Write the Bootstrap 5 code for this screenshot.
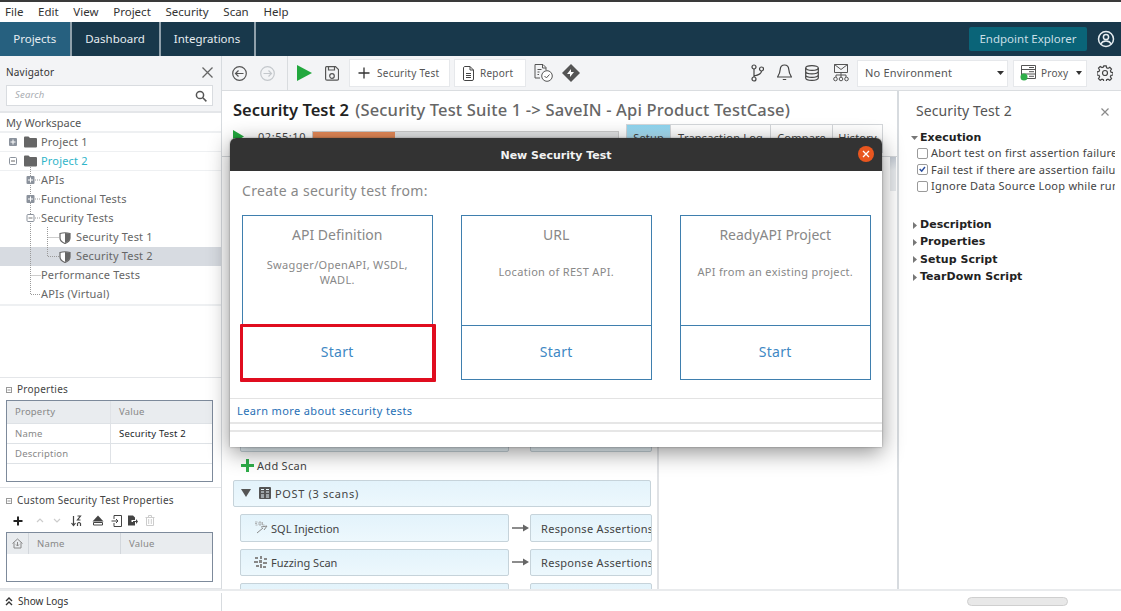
<!DOCTYPE html>
<html lang="en">
<head>
<meta charset="utf-8">
<title>New Security Test</title>
<link href="https://cdn.jsdelivr.net/npm/bootstrap@5.3.0/dist/css/bootstrap.min.css" rel="stylesheet">
<style>
html,body{height:611px;overflow:hidden}
body{font-family:"Noto Sans","Open Sans",sans-serif;font-size:11px;color:#444;background:#fff;position:relative;width:1121px;line-height:1.3}
svg{display:block;flex:none}
.rm-menu{height:22px;border-top:2px solid #3a3a3a;background:#fff;padding-left:5px;gap:14.7px;font-size:11.5px;color:#333}
.rm-top{height:34px;background:#18384b;color:#e6edf1;font-size:11.5px;flex:none}
.rm-tab{width:71.5px;border-right:2px solid #8fa0ab}
.rm-tab.rm-on{background:#26607f}
.rm-ep{width:118px;height:24px;background:#0a6478;color:#c9dfe6;border-radius:2px;font-size:11.5px}
.rm-work{height:533px}
.rm-side{width:222px;border-right:1px solid #d7dbdf;background:#fff;flex:none}
.rm-navhead{background:#f3f4f6;height:57px;padding:10px 6px 0;border-bottom:2px solid #e4e6e9;position:relative;font-size:10px;color:#333;letter-spacing:.2px}
.rm-search{height:21px;background:#fff;border:1px solid #d9dce0;margin:6px 2px 0 0;padding:0 5px 0 8px;font-style:italic;color:#a9adb2;font-size:9.5px}
.rm-ws{height:20px;padding:3px 0 0 6px;border-bottom:2px solid #eef0f2;font-size:11px;color:#555}
.rm-tree{border-bottom:2px solid #eef0f2;height:173px;position:relative}
.rm-node{height:19px;padding-left:41px;gap:5px;color:#666;white-space:nowrap;font-size:11px;letter-spacing:.18px}
.rm-node.rm-l1{padding-left:9px;border-bottom:1px solid #eef0f2;gap:4px}
.rm-node.rm-l3{padding-left:59px}
.rm-node.rm-sel{background:#d7dbe1}
.rm-teal{color:#2fb5c9}
.rm-propbox{border-top:1px solid #e4e6e9;border-bottom:1px solid #e4e6e9;height:110px;padding:5px 8px 0 6px;flex:none}
.rm-ptitle{color:#444;font-size:10px;gap:5px;height:13px;letter-spacing:.25px}
.rm-pgrid{border:1px solid #7d8a9b;margin-top:4px;color:#888;font-size:9.5px;letter-spacing:.2px}
.rm-ghead{background:#e9ecef}
.rm-c1{width:104px;padding:1px 0 0 8px;border-right:1px solid #dfe2e6;display:flex;align-items:center}
.rm-c2{flex:1;padding:1px 0 0 8px;display:flex;align-items:center}
.rm-c3{padding-top:2px}
.rm-main{width:899px;flex:none}
.rm-tool{height:35px;background:#f3f4f6;border-bottom:1px solid #dadde0;padding-left:10px;flex:none}
.rm-tbtn{height:28px;background:#fff;border:1px solid #e6e8eb;font-size:10px;color:#555;letter-spacing:.25px;gap:6px;padding:0 8px}
.rm-center{width:675px;flex:none}
.rm-title{font-size:16.5px;font-weight:600;color:#222;padding:8px 0 0 11px;height:33px;white-space:nowrap}
.rm-title span{color:#666;font-weight:500;letter-spacing:.17px;margin-left:2px}
.rm-run{height:32px;padding-left:11px;flex:none}
.rm-time{margin:6px 0 0 14px;color:#444;font-size:11px;letter-spacing:.55px}
.rm-bar{width:307px;height:12px;background:#e3e4e5;border:1px solid #ccc;margin:7px 0 0 6px;flex:none}
.rm-fill{width:27%;height:100%;background:#e68a58}
.rm-stabs{margin-left:7px}
.rm-stab{height:29px;border:1px solid #d4d7da;border-left:0;background:#fff;text-align:center;color:#444;font-size:11px;padding-top:6px;white-space:nowrap;flex:none;letter-spacing:.2px}
.rm-stab.rm-on{background:linear-gradient(#8dd4ef,#d8f0f9);border-left:1px solid #d4d7da}
.rm-split{height:433px;border-top:1px solid #d4d7da;overflow:hidden;flex:none}
.rm-left{width:437px;border-right:2px solid #e0e2e5;padding:267px 6px 0 11px;height:100%;flex:none}
.rm-scan{background:linear-gradient(#e3f3fb,#edf8fd);border:1px solid #c6d3da;border-radius:2px;height:27.5px;color:#444;flex:none}
.rm-scanA{width:269px;margin-left:7px;padding-left:13px;gap:3px}
.rm-scanA span{padding-top:2px}
.rm-scanB{width:121.5px;padding:2px 0 0 10px;white-space:nowrap;overflow:hidden;letter-spacing:.3px}
.rm-rowz{margin-bottom:7px;flex:none}
.rm-arrow{margin:0 1px 0 3px}
.rm-gapz{width:21px;flex:none}
.rm-add{height:14px;gap:3px;margin-left:8px;color:#444;margin-bottom:7px;letter-spacing:.3px;flex:none}
.rm-add span{padding-top:2px}
.rm-post{height:27.5px;background:linear-gradient(#e3f3fb,#edf8fd);border:1px solid #c6d3da;border-radius:2px;margin:0 0 7px 0;gap:4px;padding-left:7px;color:#444;flex:none;letter-spacing:.65px}
.rm-post span{padding-top:2px}
.rm-thumb{width:6px;height:34px;background:linear-gradient(#c5ccd5,#e8ebee 40%);margin:0 1px 0 auto}
.rm-right{width:224px;flex:none;border-left:2px solid #d7dbdf;padding:0 6px 0 17px;white-space:nowrap;color:#444;font-size:11px;letter-spacing:.25px}
.rm-rtitle{font-size:14px;color:#555;height:32px;padding-top:10px;position:relative;margin-bottom:6px;line-height:20px;letter-spacing:.1px}
.rm-sech{font-weight:700;color:#222;font-family:"DejaVu Sans",sans-serif;font-size:11px;height:17.3px;gap:2px;margin-left:-5px;letter-spacing:.05px}
.rm-sech.rm-first{height:16px;padding-top:2px}
.rm-chk{height:16.5px;gap:3px;margin-left:1px;color:#444;overflow:hidden}
.rm-box{width:11px;height:11px;border:1px solid #9a9a9a;border-radius:2px;background:#fff;flex:none;display:block}
.rm-car{margin:0 1px 0 2px}
.rm-status{height:22px;border-top:2px solid #e9ebed;background:#fff;padding-left:5px;color:#333;font-size:10px;position:relative}
.rm-hscroll{position:absolute;left:967px;top:6px;width:101px;height:9px;background:#e8e8e8;border:1px solid #cfcfcf;border-radius:5px}
.rm-vl{position:absolute;left:221px;top:2px;height:18px;border-left:1px solid #d7dbdf}
.rm-sel-env{height:27px;background:#fff;border:1px solid #e6e8eb;color:#555;font-size:11px;letter-spacing:.2px}
.rm-sel-env span{padding-top:1px}
.rm-dlg{position:absolute;left:230px;top:138px;width:652px;height:309px;background:#fff;border-radius:6px 6px 0 0;box-shadow:0 5px 22px rgba(0,0,0,.45),0 0 2px rgba(0,0,0,.4);z-index:5}
.rm-dh{height:33px;padding-top:4px;background:#333;border-radius:6px 6px 0 0;color:#f2f2f2;font-weight:700;font-size:11px;font-family:"DejaVu Sans",sans-serif;position:relative}
.rm-dclose{position:absolute;right:8px;top:8px;width:16px;height:16px;border-radius:50%;background:#e9561f}
.rm-from{padding:11px 0 0 12px;font-size:14px;color:#888;height:44px;letter-spacing:.3px}
.rm-cards{padding-left:12px;gap:28.500px}
.rm-opt{width:190.500px;height:165px;border:1px solid #3f7fae;text-align:center;color:#888;display:flex;flex-direction:column;position:relative}
.rm-opth{height:110px;border-bottom:1px solid #3f7fae;padding:9px 16px 0;font-size:11px;line-height:15px;letter-spacing:.33px}
.rm-opth b{display:block;font-weight:400;font-size:14px;line-height:20px;height:32px;color:#888;letter-spacing:0}
.rm-start{flex:1;display:flex;align-items:center;justify-content:center;color:#4088c4;font-size:14px;letter-spacing:.3px}
.rm-red{position:absolute;left:-3px;top:107.500px;width:196px;height:58.500px;border-style:solid;border-color:#e00d1f;border-width:3px 4px 4px 3px;border-radius:1px}
.rm-learn{margin-top:18px;border-top:1px solid #e3e3e3;border-bottom:2px solid #e6e6e6;height:26px;padding:1px 0 0 7px;color:#1f6fb5;font-size:11px;display:flex;align-items:center;letter-spacing:.37px}
.rm-line{margin-top:6px;border-top:2px solid #e6e6e6}
.rm-pt7{padding-top:7px}
</style>
</head>
<body>
<div class="rm-menu d-flex align-items-center"><span>File</span><span>Edit</span><span>View</span><span>Project</span><span>Security</span><span>Scan</span><span>Help</span></div>

<div class="rm-top d-flex align-items-stretch">
  <div class="rm-tab rm-on d-flex align-items-center justify-content-center">Projects</div>
  <div class="rm-tab d-flex align-items-center justify-content-center" style="width:89px">Dashboard</div>
  <div class="rm-tab d-flex align-items-center justify-content-center" style="width:95px">Integrations</div>
  <div class="flex-grow-1"></div>
  <div class="d-flex align-items-center" style="gap:10px;padding-right:6px">
    <div class="rm-ep d-flex align-items-center justify-content-center">Endpoint Explorer</div>
    <svg width="18" height="18" viewBox="0 0 18 18" fill="none" stroke="#e6edf1" stroke-width="1.500"><circle cx="9" cy="9" r="7.500"/><circle cx="9" cy="7" r="2.600"/><path d="M3.800 14c1.200-2.400 3-3 5.200-3s4 .6 5.200 3"/></svg>
  </div>
</div>

<div class="rm-work d-flex">
  <div class="rm-side d-flex flex-column">
    <div class="rm-navhead">
      <div class="d-flex justify-content-between align-items-center" style="height:13px;padding-right:2px"><span>Navigator</span>
        <svg width="11" height="11" viewBox="0 0 11 11" stroke="#666" stroke-width="1.300"><path d="M.5.5l10 10M10.500.5l-10 10"/></svg></div>
      <div class="rm-search d-flex align-items-center justify-content-between"><span>Search</span>
        <svg width="12" height="12" viewBox="0 0 12 12" fill="none" stroke="#555" stroke-width="1.500"><circle cx="5" cy="5" r="3.600"/><path d="M7.800 7.800l3.600 3.600"/></svg></div>
    </div>
    <div class="rm-ws">My Workspace</div>
    <div class="rm-tree">
      <div class="rm-node rm-l1 d-flex align-items-center">
        <svg width="8" height="8" viewBox="0 0 8 8"><rect width="8" height="8" rx="1" fill="#8b929c"/><path d="M1.500 4h5M4 1.500v5" stroke="#fff"/></svg>
        <svg width="13" height="12" viewBox="0 0 13 12" fill="#666" style="margin-left:3px"><path d="M0 1.500Q0 .5 1 .5h3.500L6 2h6q1 0 1 1v7.500q0 1-1 1H1q-1 0-1-1z"/></svg>
        <span>Project 1</span>
      </div>
      <div class="rm-node rm-l1 d-flex align-items-center">
        <svg width="8" height="8" viewBox="0 0 8 8" fill="none"><rect x=".5" y=".5" width="7" height="7" rx="1" stroke="#8b929c"/><path d="M2 4h4" stroke="#666"/></svg>
        <svg width="13" height="12" viewBox="0 0 13 12" fill="#666" style="margin-left:3px"><path d="M0 1.500Q0 .5 1 .5h3.500L6 2h6q1 0 1 1v7.500q0 1-1 1H1q-1 0-1-1z"/></svg>
        <span class="rm-teal">Project 2</span>
      </div>
      <div class="rm-node d-flex align-items-center">APIs</div>
      <div class="rm-node d-flex align-items-center">Functional Tests</div>
      <div class="rm-node d-flex align-items-center">Security Tests</div>
      <div class="rm-node rm-l3 d-flex align-items-center">
        <svg width="12" height="12" viewBox="0 0 12 12"><path d="M1 1.500Q6 0 11 1.500V6q0 3.500-5 5.500Q1 9.500 1 6z" fill="#fff" stroke="#666" stroke-width="1.200"/><path d="M6 1v10q5-2 5-5V1.500z" fill="#666"/></svg>
        <span>Security Test 1</span>
      </div>
      <div class="rm-node rm-l3 rm-sel d-flex align-items-center">
        <svg width="12" height="12" viewBox="0 0 12 12"><path d="M1 1.500Q6 0 11 1.500V6q0 3.500-5 5.500Q1 9.500 1 6z" fill="#fff" stroke="#666" stroke-width="1.200"/><path d="M6 1v10q5-2 5-5V1.500z" fill="#666"/></svg>
        <span>Security Test 2</span>
      </div>
      <div class="rm-node d-flex align-items-center">Performance Tests</div>
      <div class="rm-node d-flex align-items-center">APIs (Virtual)</div>
      <svg width="60" height="173" viewBox="0 0 60 173" fill="none" stroke="#9a9a9a" stroke-dasharray="1 1" style="position:absolute;left:0;top:0;pointer-events:none">
        <path d="M30.500 34V161.500H41M35 47H41M35 66H41M35 85H41M30.500 142.500H41M47.500 94V123.500H59M47.500 104.500H59"/>
        <rect x="26.500" y="43" width="8" height="8" rx="1" fill="#8b929c" stroke="none"/><path d="M28 47h5M30.500 44.500v5" stroke="#fff" stroke-dasharray="none"/>
        <rect x="26.500" y="62" width="8" height="8" rx="1" fill="#8b929c" stroke="none"/><path d="M28 66h5M30.500 63.500v5" stroke="#fff" stroke-dasharray="none"/>
        <rect x="27" y="81.500" width="7" height="7" rx="1" fill="#fff" stroke="#8b929c" stroke-dasharray="none"/><path d="M28.500 85h4" stroke="#777" stroke-dasharray="none"/>
      </svg>
    </div>
    <div class="flex-grow-1"></div>
    <div class="rm-propbox" style="border-bottom:0">
      <div class="rm-ptitle d-flex align-items-center">
        <svg width="6" height="6" viewBox="0 0 6 6" fill="none" stroke="#999"><rect x=".5" y=".5" width="5" height="5"/><path d="M1.500 3h3"/></svg><span>Properties</span></div>
      <div class="rm-pgrid">
        <div class="rm-ghead d-flex" style="height:22px"><div class="rm-c1">Property</div><div class="rm-c2">Value</div></div>
        <div class="d-flex border-top" style="height:20px"><div class="rm-c1">Name</div><div class="rm-c2 text-dark">Security Test 2</div></div>
        <div class="d-flex border-top border-bottom" style="height:21px"><div class="rm-c1">Description</div><div class="rm-c2"></div></div>
        <div style="height:17px"></div>
      </div>
    </div>
    <div class="rm-propbox" style="height:102px;padding-top:6px">
      <div class="rm-ptitle d-flex align-items-center">
        <svg width="6" height="6" viewBox="0 0 6 6" fill="none" stroke="#999"><rect x=".5" y=".5" width="5" height="5"/><path d="M1.500 3h3"/></svg><span>Custom Security Test Properties</span></div>
      <div class="d-flex align-items-center" style="height:19px;margin-top:4px;padding-left:7px;gap:7px">
        <svg width="10" height="10" viewBox="0 0 10 10" stroke="#222" stroke-width="2"><path d="M5 .5v9M.5 5h9"/></svg>
        <svg width="8" height="5" viewBox="0 0 8 5" fill="none" stroke="#ccc" stroke-width="1.200" style="margin-left:6px"><path d="M1 4l3-3 3 3"/></svg>
        <svg width="8" height="5" viewBox="0 0 8 5" fill="none" stroke="#ccc" stroke-width="1.200" style="margin-left:2px"><path d="M1 1l3 3 3-3"/></svg>
        <svg width="11" height="12" viewBox="0 0 11 12" fill="none" stroke="#444" stroke-width="1.200" style="margin-left:3px"><path d="M2.500 1v9M.5 8l2 2.500L4.500 8M6.500 1h3l-3 4h3M6.500 11V8.500q1.500-2 3 0V11"/></svg>
        <svg width="12" height="11" viewBox="0 0 12 11" fill="#444" style="margin-left:3px"><path d="M6 .5l5.500 6H.5z"/><path d="M1.500 7.500h9V10h-9z" fill="#fff" stroke="#444"/></svg>
        <svg width="11" height="12" viewBox="0 0 11 12" fill="none" stroke="#444"><path d="M3 4V.5h7.500v11H3V8M.5 6h6M5 4l2 2-2 2"/></svg>
        <svg width="11" height="12" viewBox="0 0 11 12" fill="#444" style="margin-left:-2px"><path d="M1 .5h5l2 2V5H4.500v2H8v3.500H1z"/><path d="M6 6h3V4l2 2.500L9 9V7H6z"/></svg>
        <svg width="10" height="11" viewBox="0 0 10 11" fill="none" stroke="#ccc"><path d="M1.500 2.500v8h7v-8M.5 2.500h9M3.500 2.500V.5h3v2M3.700 4v5M6.300 4v5"/></svg>
      </div>
      <div class="rm-pgrid" style="margin-top:2px;height:50px">
        <div class="rm-ghead d-flex" style="height:21px">
          <div class="d-flex align-items-center justify-content-center" style="width:22px;border-right:1px solid #d3d7dc">
            <svg width="11" height="11" viewBox="0 0 11 11" fill="none" stroke="#888"><path d="M.5 5.500L5.500 1l5 4.500M2 4.500V10h7V4.500M5.500 4v4M4 6.500l1.500 1.500L7 6.500"/></svg></div>
          <div class="d-flex align-items-center rm-c3" style="width:92px;padding-left:8px;border-right:1px solid #d3d7dc">Name</div>
          <div class="rm-c2 rm-c3">Value</div>
        </div>
      </div>
    </div>
  </div>

  <div class="rm-main d-flex flex-column">
    <div class="rm-tool d-flex align-items-center">
      <svg width="15" height="15" viewBox="0 0 15 15" fill="none" stroke="#555" stroke-width="1.200"><circle cx="7.500" cy="7.500" r="6.800"/><path d="M11.500 7.500h-8M6.500 4.500l-3 3 3 3"/></svg>
      <svg width="15" height="15" viewBox="0 0 15 15" fill="none" stroke="#c4c8cc" stroke-width="1.200" style="margin-left:13px"><circle cx="7.500" cy="7.500" r="6.800"/><path d="M3.500 7.500h8M8.500 4.500l3 3-3 3"/></svg>
      <div style="border-left:1px solid #d9dcdf;height:35px;margin-left:12px"></div>
      <svg width="15" height="16" viewBox="0 0 15 16" fill="#22a83e" style="margin-left:9px"><path d="M0 0l15 8-15 8z"/></svg>
      <svg width="14" height="15" viewBox="0 0 14 15" fill="none" stroke="#555" stroke-width="1.200" style="margin-left:13px"><path d="M1.500.7h9l3 3v9q0 1.500-1.500 1.500h-10Q.6 14.200.6 12.700v-10.500Q.6.700 1.500.700z"/><path d="M3.500 1v3h6V1"/><circle cx="7" cy="10" r="2.300"/></svg>
      <div class="rm-tbtn d-flex align-items-center" style="margin-left:10px;width:101px;gap:7px">
        <svg width="12" height="12" viewBox="0 0 12 12" stroke="#333" stroke-width="1.300"><path d="M6 .5v11M.5 6h11"/></svg><span>Security Test</span></div>
      <div class="rm-tbtn d-flex align-items-center" style="margin-left:4px;width:72px">
        <svg width="11" height="15" viewBox="0 0 11 15" fill="none" stroke="#444"><path d="M1.500.5h5.500l3.500 3.500v9q0 1.500-1.500 1.500h-7.500q-1 0-1-1.500v-11q0-1 1-1.500z"/><path d="M3 7.500h5M3 9.500h5M3 11.500h5"/><path d="M7 .5v3.500h3.500"/></svg><span>Report</span></div>
      <svg width="19" height="18" viewBox="0 0 19 18" fill="none" stroke="#555" style="margin-left:8px"><path d="M6 14H1V.5h8L12 3.500V6"/><path d="M3.500 5.500h4M3.500 8h2M3.500 10.500h1.500"/><path d="M8.500.5v3.500H12"/><circle cx="13" cy="12" r="5.300" fill="#fff"/><path d="M10.500 12l1.900 1.900 3.100-3.400"/></svg>
      <svg width="18" height="18" viewBox="0 0 18 18" style="margin-left:9px"><path d="M9 0l9 9-9 9-9-9z" fill="#555"/><path d="M9 5l-4 5h3v3l4-5H9z" fill="#fff"/></svg>

      <svg width="13" height="18" viewBox="0 0 13 18" fill="none" stroke="#444" stroke-width="1.200" style="margin-left:171px"><circle cx="3" cy="3" r="2"/><circle cx="3" cy="15" r="2"/><circle cx="10.500" cy="5" r="2"/><path d="M3 5v8M10.500 7q0 3.500-7.500 5"/></svg>
      <svg width="15" height="18" viewBox="0 0 15 18" fill="none" stroke="#444" stroke-width="1.200" style="margin-left:13px"><path d="M7.500 1q4 0 4.300 4.500c.2 4 1.700 6 2.700 7.500H.5c1-1.500 2.500-3.500 2.700-7.500Q3.500 1 7.500 1zM5.800 15.500h3.400"/></svg>
      <svg width="14" height="16" viewBox="0 0 14 16" fill="none" stroke="#444" stroke-width="1.200" style="margin-left:13px"><ellipse cx="7" cy="3" rx="6.300" ry="2.400"/><path d="M.7 3v10c0 1.300 2.800 2.400 6.300 2.400s6.300-1.100 6.300-2.400V3M.7 6.500c0 1.300 2.800 2.400 6.300 2.400s6.300-1.100 6.300-2.400M.7 10c0 1.300 2.800 2.400 6.300 2.400s6.300-1.100 6.300-2.400"/></svg>
      <svg width="18" height="18" viewBox="0 0 18 18" fill="none" stroke="#555" style="margin-left:13px"><path d="M2.500.5h13v8h-13zM2.500.5L9 5.500l6.500-5M9 8.500V13M4 13v-2h10v2"/><circle cx="3.500" cy="15" r="1.800"/><circle cx="9" cy="15" r="1.800"/><circle cx="14.500" cy="15" r="1.800"/></svg>
      <div class="rm-sel-env d-flex align-items-center justify-content-between" style="width:151px;margin-left:7px;padding:0 3px 0 7px"><span>No Environment</span>
        <svg width="7" height="4" viewBox="0 0 7 4" fill="#333"><path d="M0 0h7L3.500 4z"/></svg></div>
      <div class="rm-sel-env d-flex align-items-center" style="width:74px;margin-left:5px;padding-left:6px;font-size:10px">
        <svg width="16" height="16" viewBox="0 0 16 16" fill="none" stroke="#555"><path d="M1.500.5h14v13h-14zM1.500 4.500h14M1.500 9h14M9 2.500h5M9 6.700h5M9 11.300h5"/><circle cx="4" cy="12" r="3.500" fill="#2fae4a" stroke="none"/></svg>
        <span style="margin-left:5px">Proxy</span>
        <svg width="6" height="4" viewBox="0 0 6 4" fill="#333" style="margin-left:8px"><path d="M0 0h6L3 4z"/></svg></div>
      <svg width="16" height="16" viewBox="0 0 16 16" fill="none" stroke="#444" stroke-width="1.200" style="margin-left:10px"><circle cx="8" cy="8" r="2.500"/><path d="M6.800.8h2.400l.4 2 1.400.6 1.800-1.100 1.700 1.700-1.100 1.800.6 1.400 2 .4v2.400l-2 .4-.6 1.400 1.100 1.800-1.700 1.700-1.800-1.100-1.400.6-.4 2H6.800l-.4-2-1.400-.6-1.800 1.100-1.700-1.700 1.100-1.800-.6-1.400-2-.4V6.800l2-.4.6-1.400-1.100-1.800 1.700-1.700 1.800 1.100 1.400-.6z"/></svg>
    </div>

    <div class="d-flex flex-grow-1">
      <div class="rm-center d-flex flex-column">
        <div class="rm-title">Security Test 2 <span>(Security Test Suite 1 -&gt; SaveIN - Api Product TestCase)</span></div>
        <div class="rm-run d-flex align-items-start">
          <svg width="11" height="13" viewBox="0 0 11 13" fill="#22a83e" style="margin-top:6px"><path d="M0 0l11 6.500L0 13z"/></svg>
          <span class="rm-time">02:55:10</span>
          <div class="rm-bar"><div class="rm-fill"></div></div>
          <div class="rm-stabs d-flex">
            <div class="rm-stab rm-on" style="width:45px">Setup</div><div class="rm-stab" style="width:100px">Transaction Log</div><div class="rm-stab" style="width:62px">Compare</div><div class="rm-stab" style="width:50px">History</div>
          </div>
        </div>
        <div class="rm-split d-flex">
          <div class="rm-left d-flex flex-column">
            <div class="rm-rowz d-flex align-items-center"><div class="rm-scan rm-scanA"></div><div class="rm-gapz"></div><div class="rm-scan rm-scanB"></div></div>
            <div class="rm-add d-flex align-items-center">
              <svg width="13" height="13" viewBox="0 0 13 13" stroke="#2fae4a" stroke-width="3"><path d="M6.500 0v13M0 6.500h13"/></svg><span>Add Scan</span></div>
            <div class="rm-post d-flex align-items-center">
              <svg width="10" height="8" viewBox="0 0 10 8" fill="#555"><path d="M0 0h10L5 8z"/></svg>
              <svg width="12" height="12" viewBox="0 0 12 12" style="margin-left:4px"><rect width="12" height="12" rx="1" fill="#555"/><path d="M2 2.500h3M7 2.500h3M2 5h3M7 5h3M2 8h3M7 8h3M2 10h3M7 10h3" stroke="#e9f6fb"/></svg>
              <span>POST (3 scans)</span></div>
            <div class="rm-rowz d-flex align-items-center">
              <div class="rm-scan rm-scanA d-flex align-items-center">
                <svg width="14" height="13" viewBox="0 0 14 13" fill="none" stroke="#999"><path d="M3 12l6-5M7 6l6-1-3 4" stroke="#8a8a8a"/><path d="M1 1h2.500M1 2.500h2M1.500 4h2M5 1h2v3H5zM8.500 1v3h2" stroke="#999" stroke-width=".7"/></svg>
                <span>SQL Injection</span></div>
              <svg class="rm-arrow" width="17" height="8" viewBox="0 0 17 8"><path d="M0 4h12" stroke="#666" stroke-width="1.500"/><path d="M11 .5L17 4l-6 3.500z" fill="#666"/></svg>
              <div class="rm-scan rm-scanB d-flex align-items-center">Response Assertions</div>
            </div>
            <div class="rm-rowz d-flex align-items-center">
              <div class="rm-scan rm-scanA d-flex align-items-center">
                <svg width="13" height="13" viewBox="0 0 13 13" fill="#888" style="margin-right:1px"><path d="M1 1h3v2H1zM6 0h2v3H6zM10 2h3v2h-3zM0 5h4v2H0zM5 4h3v3H5zM9 6h4v2H9zM2 9h3v2H2zM6 8h2v4H6zM9 10h3v2H9z"/></svg>
                <span>Fuzzing Scan</span></div>
              <svg class="rm-arrow" width="17" height="8" viewBox="0 0 17 8"><path d="M0 4h12" stroke="#666" stroke-width="1.500"/><path d="M11 .5L17 4l-6 3.500z" fill="#666"/></svg>
              <div class="rm-scan rm-scanB d-flex align-items-center">Response Assertions</div>
            </div>
            <div class="rm-rowz d-flex align-items-center"><div class="rm-scan rm-scanA"></div><div class="rm-gapz"></div><div class="rm-scan rm-scanB"></div></div>
          </div>
          <div class="rm-thumb"></div>
        </div>
      </div>

      <div class="rm-right">
        <div class="rm-rtitle">Security Test 2
          <svg width="8" height="8" viewBox="0 0 8 8" stroke="#8a8a8a" stroke-width="1.200" style="position:absolute;left:185px;top:17px"><path d="M.5.5l7 7M7.500.5l-7 7"/></svg></div>
        <div class="rm-sech rm-first d-flex align-items-center"><svg width="7" height="4" viewBox="0 0 7 4" fill="#777"><path d="M0 0h7L3.500 4z"/></svg>Execution</div>
        <div class="rm-chk d-flex align-items-center"><span class="rm-box"></span>Abort test on first assertion failure</div>
        <div class="rm-chk d-flex align-items-center"><svg class="rm-box" width="11" height="11" viewBox="0 0 11 11" fill="none"><path d="M2 5l2.500 2.500L8.500 2.500" stroke="#2c4f9e" stroke-width="1.800"/></svg>Fail test if there are assertion failures</div>
        <div class="rm-chk d-flex align-items-center"><span class="rm-box"></span>Ignore Data Source Loop while running</div>
        <div style="height:22px"></div>
        <div class="rm-sech d-flex align-items-center"><svg class="rm-car" width="4" height="7" viewBox="0 0 4 7" fill="#777"><path d="M0 0l4 3.500L0 7z"/></svg>Description</div>
        <div class="rm-sech d-flex align-items-center"><svg class="rm-car" width="4" height="7" viewBox="0 0 4 7" fill="#777"><path d="M0 0l4 3.500L0 7z"/></svg>Properties</div>
        <div class="rm-sech d-flex align-items-center"><svg class="rm-car" width="4" height="7" viewBox="0 0 4 7" fill="#777"><path d="M0 0l4 3.500L0 7z"/></svg>Setup Script</div>
        <div class="rm-sech d-flex align-items-center"><svg class="rm-car" width="4" height="7" viewBox="0 0 4 7" fill="#777"><path d="M0 0l4 3.500L0 7z"/></svg>TearDown Script</div>
      </div>
    </div>
  </div>
</div>

<div class="rm-status d-flex align-items-center">
  <svg width="8" height="9" viewBox="0 0 8 9" fill="none" stroke="#333" stroke-width="1.400" style="margin-right:5px"><path d="M1 4l3-3 3 3M1 8l3-3 3 3"/></svg>Show Logs
  <div class="rm-vl"></div>
  <div class="rm-hscroll"></div>
</div>

<div class="rm-dlg">
  <div class="rm-dh d-flex align-items-center justify-content-center">New Security Test
    <div class="rm-dclose d-flex align-items-center justify-content-center">
      <svg width="8" height="8" viewBox="0 0 8 8" stroke="#fff" stroke-width="1.300"><path d="M1 1l6 6M7 1L1 7"/></svg></div>
  </div>
  <div class="rm-from">Create a security test from:</div>
  <div class="rm-cards d-flex">
    <div class="rm-opt">
      <div class="rm-opth"><b>API Definition</b>Swagger/OpenAPI, WSDL, WADL.</div>
      <div class="rm-start">Start</div>
      <div class="rm-red"></div>
    </div>
    <div class="rm-opt">
      <div class="rm-opth"><b>URL</b><div class="rm-pt7">Location of REST API.</div></div>
      <div class="rm-start">Start</div>
    </div>
    <div class="rm-opt">
      <div class="rm-opth"><b>ReadyAPI Project</b><div class="rm-pt7">API from an existing project.</div></div>
      <div class="rm-start">Start</div>
    </div>
  </div>
  <div class="rm-learn">Learn more about security tests</div>
  <div class="rm-line"></div>
</div>
</body>
</html>
